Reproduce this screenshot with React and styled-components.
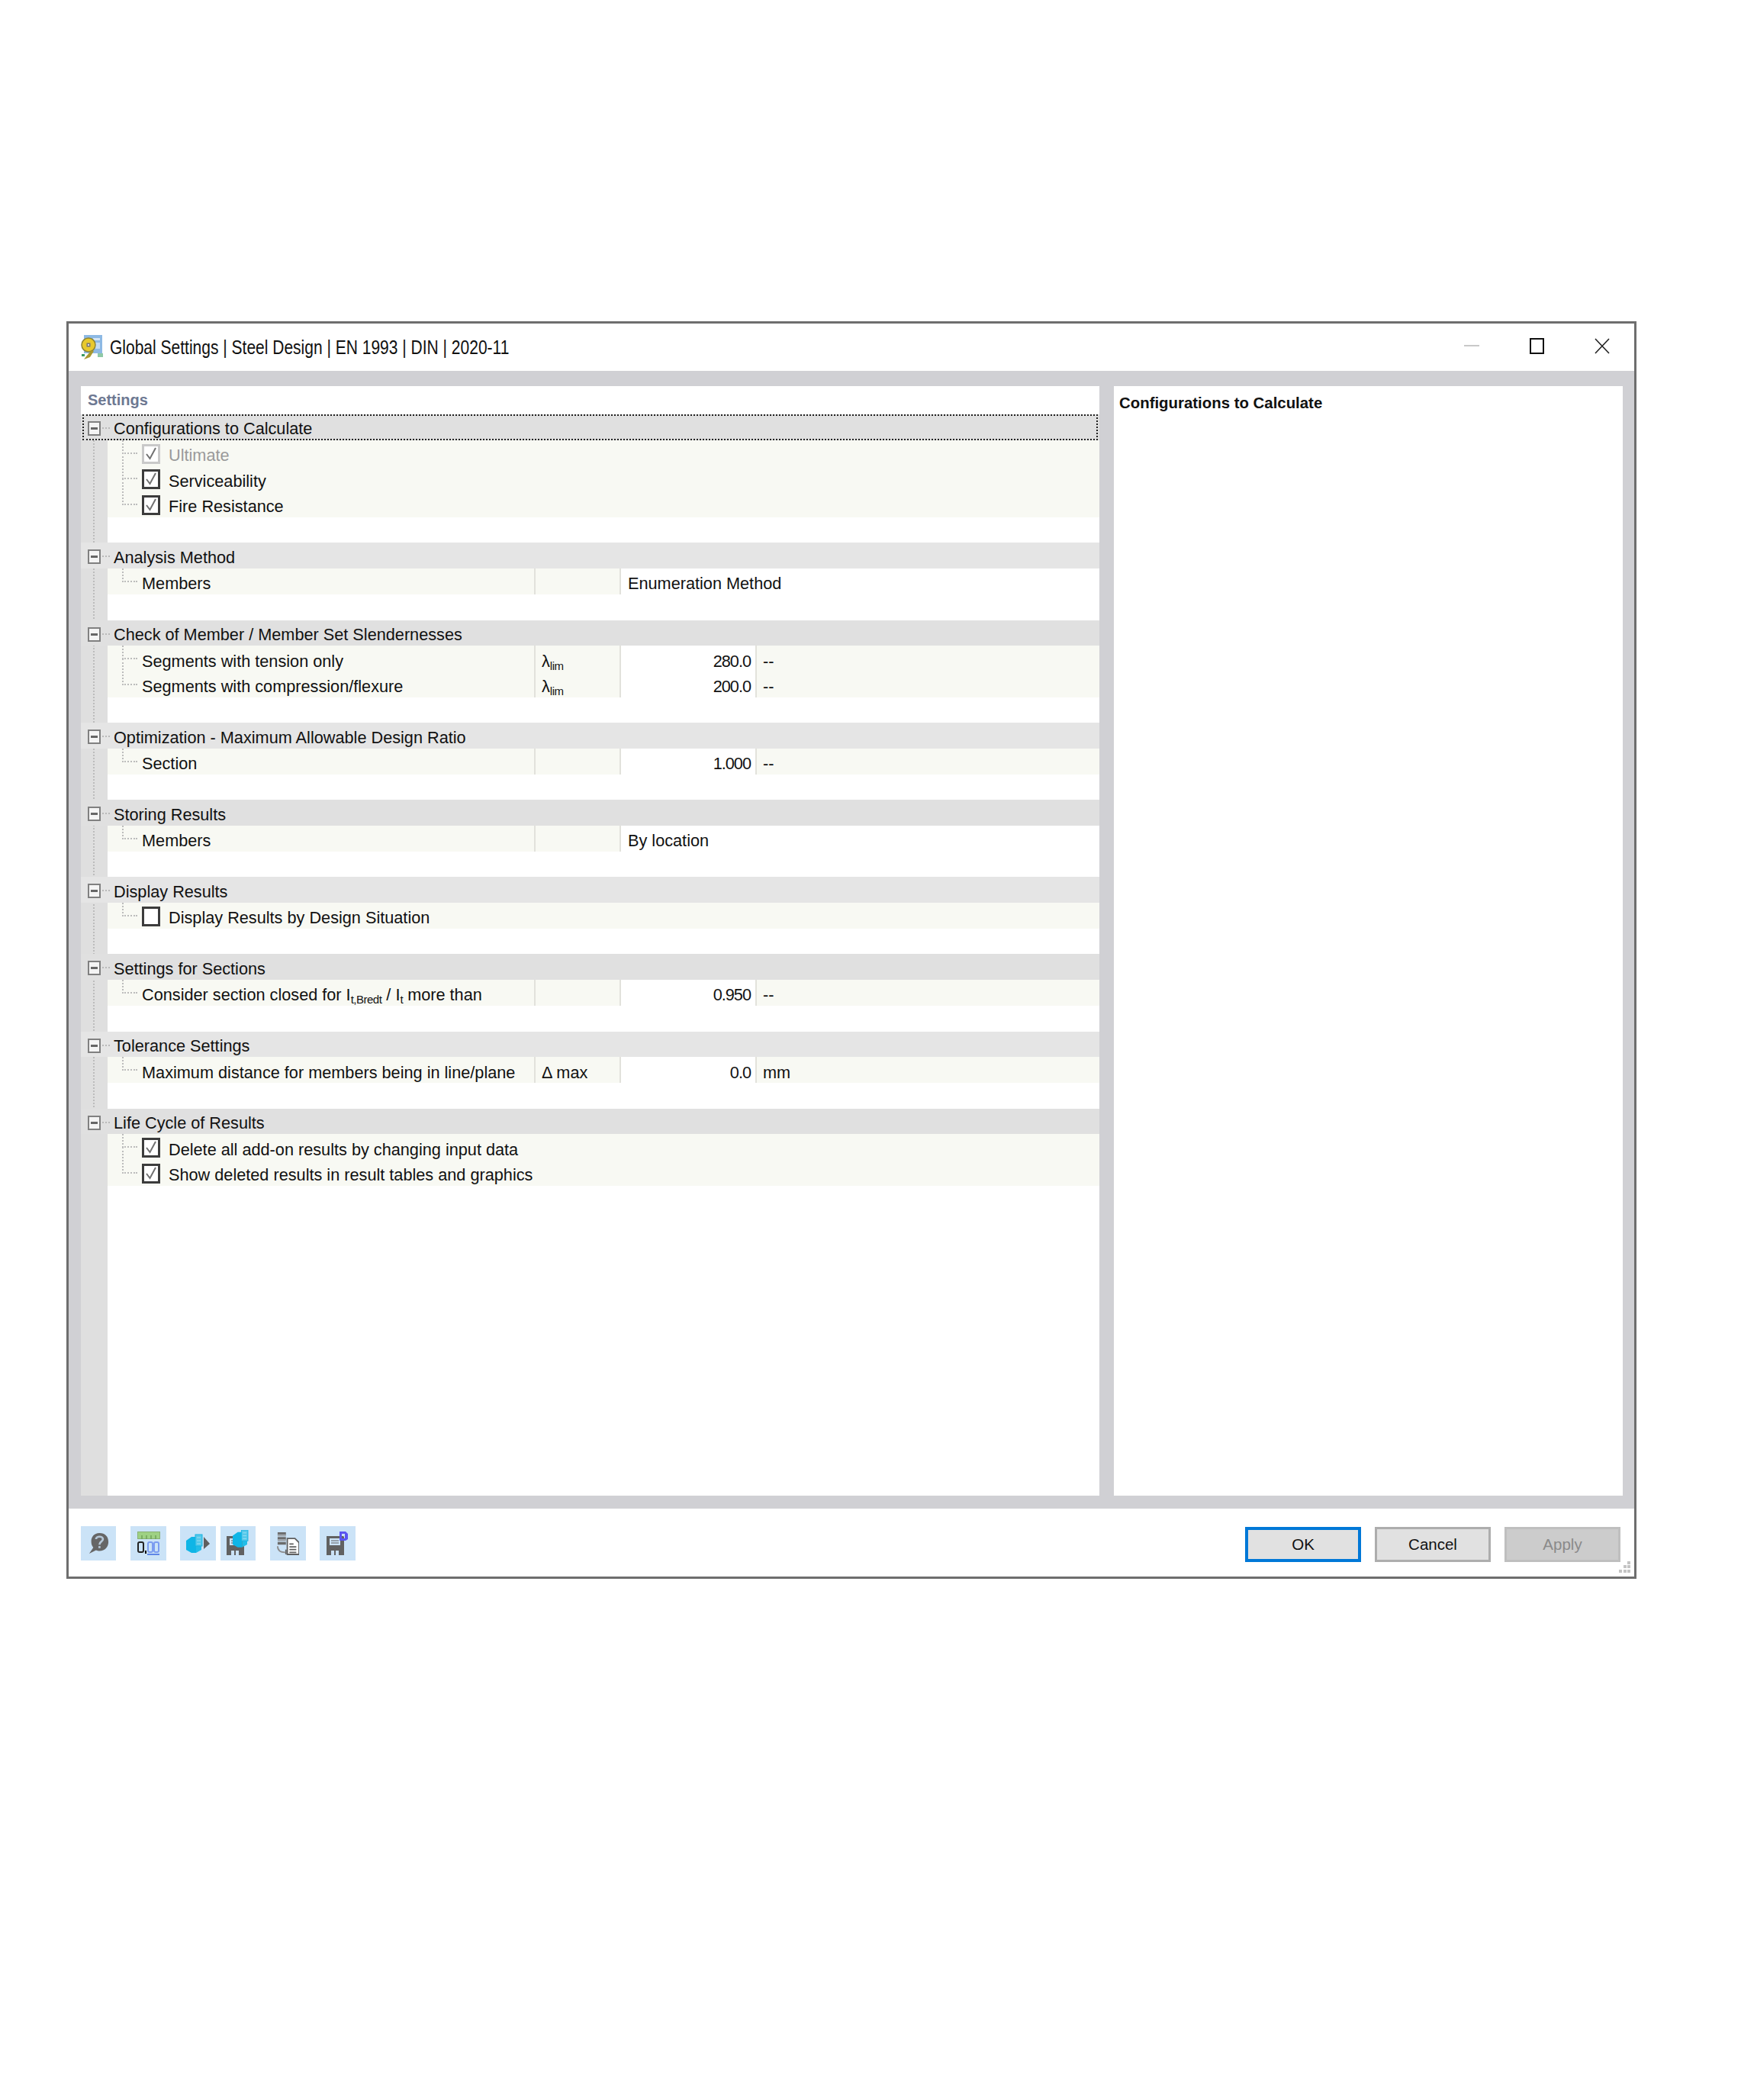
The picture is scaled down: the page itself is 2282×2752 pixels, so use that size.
import React from "react";
import styled, { createGlobalStyle } from "styled-components";

const ROW = 33.69;

const Global = createGlobalStyle`
  html, body { margin: 0; padding: 0; background: #fff; }
  body { font-family: "Liberation Sans", Arial, sans-serif; color: #111; }
`;

const Page = styled.div`
  width: 2282px;
  height: 2752px;
  padding: 421px 0 0 87px;
  box-sizing: border-box;
`;

const Win = styled.div`
  width: 2058px;
  height: 1648px;
  box-sizing: border-box;
  border: 3px solid #6e6e6e;
  display: flex;
  flex-direction: column;
  background: #d0d0d4;
`;

const TitleBar = styled.div`
  height: 62px;
  flex: none;
  background: #fff;
  display: flex;
  align-items: center;
  padding-left: 15px;
`;

const TitleText = styled.span`
  margin-left: 9px;
  font-size: 21px;
  display: inline-block;
  transform: scaleY(1.27);
  white-space: nowrap;
`;

const WinButtons = styled.div`
  margin-left: auto;
  margin-top: -4px;
  display: flex;
  align-items: center;
  padding-right: 32px;
  gap: 66px;
`;

const Body = styled.div`
  flex: 1;
  display: flex;
  gap: 19px;
  padding: 20px 15px 17px 16px;
  min-height: 0;
`;

const LeftPanel = styled.div`
  width: 1335px;
  background: #fff;
  display: flex;
  flex-direction: column;
  position: relative;
`;

const PanelTitle = styled.div`
  height: 37px;
  flex: none;
  line-height: 37px;
  padding-left: 9px;
  font-size: 20px;
  font-weight: bold;
  color: #6d7892;
`;

const Tree = styled.div`
  flex: 1;
  position: relative;
  background: linear-gradient(to right, #dfdfdf 35px, #fff 35px);
`;

const RowBase = styled.div`
  height: ${ROW}px;
  box-sizing: border-box;
  display: flex;
  align-items: center;
  font-size: 21.7px;
  white-space: nowrap;
  position: relative;
`;

const RowText = styled.span`
  margin-top: 5px;
  letter-spacing: ${(p) => (p.$num ? "-1px" : "normal")};
  color: ${(p) => (p.$off ? "#9a9a9a" : "#111")};
`;

const HeaderRow = styled(RowBase)`
  background: ${(p) => (p.$light ? "#e5e5e5" : "#e0e0e0")};
  padding-left: 43px;
  ${(p) =>
    p.$focus &&
    `&::after {
      content: "";
      position: absolute;
      inset: 0 2px;
      border: 2px dotted #222;
    }`}
`;

const ExpandBox = styled.span`
  position: absolute;
  left: 9px;
  top: 9px;
  width: 17px;
  height: 19px;
  box-sizing: border-box;
  border: 2px solid #808080;
  background: #f4f4f4;
  &::after {
    content: "";
    position: absolute;
    left: 2px;
    right: 2px;
    top: 6px;
    height: 3px;
    background: #666;
  }
`;

const HLine = styled.span`
  position: absolute;
  left: 28px;
  width: 10px;
  top: 17px;
  border-top: 2px dotted #b9b9b9;
`;

const Spine = styled.span`
  position: absolute;
  left: 16px;
  top: 22px;
  height: ${(p) => p.$h}px;
  border-left: 2px dotted #bcbcbc;
`;

const ChildRow = styled(RowBase)`
  margin-left: 35px;
  padding-left: 45px;
  padding-top: 2px;
  background: #f8f9f3;
`;

const ChildLine = styled.span`
  position: absolute;
  left: 19px;
  top: ${(p) => (p.$first ? 0 : -17)}px;
  height: ${(p) => (p.$first ? 18 : 35)}px;
  width: 20px;
  box-sizing: border-box;
  border-left: 2px dotted #bcbcbc;
  border-bottom: 2px dotted #bcbcbc;
`;

const Blank = styled.div`
  height: ${ROW}px;
`;

const CheckBox = styled.span`
  width: 24px;
  height: 26px;
  box-sizing: border-box;
  border: 3px solid ${(p) => (p.$off ? "#c9c9c9" : "#3c3c3c")};
  background: #fff;
  flex: none;
  margin-right: 11px;
  display: flex;
  align-items: center;
  justify-content: center;
`;

const Cols = styled.div`
  display: grid;
  grid-template-columns: 561px 112px 178px 1fr;
  height: ${ROW}px;
  margin-left: 35px;
  font-size: 21.7px;
  white-space: nowrap;
  position: relative;
`;

const LabelCell = styled.div`
  background: #f8f9f3;
  display: flex;
  align-items: center;
  padding: 2px 0 0 45px;
  border-right: 2px solid #e2e2dc;
`;

const SymbolCell = styled.div`
  background: #f8f9f3;
  display: flex;
  align-items: center;
  padding: 2px 0 0 8px;
  border-right: 2px solid #e2e2dc;
`;

const ValueCell = styled.div`
  display: flex;
  align-items: center;
  justify-content: flex-end;
  padding: 2px 6px 0 0;
  border-right: 2px solid #e2e2dc;
  background: #fff;
`;

const UnitCell = styled.div`
  display: flex;
  align-items: center;
  padding: 2px 0 0 8px;
  background: #f8f9f3;
`;

const WideValue = styled.div`
  grid-column: 3 / 5;
  display: flex;
  align-items: center;
  padding: 2px 0 0 9px;
  background: #fff;
`;

const Small = styled.span`
  font-size: 15px;
  position: relative;
  top: 4px;
  letter-spacing: -0.5px;
`;

const RightPanel = styled.div`
  flex: 1;
  background: #fff;
  padding: 11px 7px;
  font-size: 20.4px;
  font-weight: bold;
  color: #111;
`;

const Footer = styled.div`
  height: 89px;
  flex: none;
  background: #fff;
  display: flex;
  align-items: center;
  padding: 0 18px 0 16px;
  position: relative;
`;

const Tools = styled.div`
  display: flex;
  align-items: center;
  margin-top: 2px;
`;

const ToolBtn = styled.div`
  width: ${(p) => p.$w || 47}px;
  height: 45px;
  background: #cbe3f7;
  margin-left: ${(p) => p.$gap || 0}px;
  display: flex;
  align-items: center;
  justify-content: center;
`;

const Buttons = styled.div`
  margin-left: auto;
  margin-top: 5px;
  display: flex;
  gap: 18px;
`;

const Btn = styled.div`
  width: 152px;
  height: 46px;
  box-sizing: border-box;
  display: flex;
  align-items: center;
  justify-content: center;
  font-size: 20.5px;
  background: ${(p) => (p.$disabled ? "#cccccc" : "#e1e1e1")};
  color: ${(p) => (p.$disabled ? "#8a8a8a" : "#111")};
  border: ${(p) =>
    p.$primary ? "4px solid #0078d7" : p.$disabled ? "3px solid #bfbfbf" : "3px solid #adadad"};
`;

const Grip = styled.svg`
  position: absolute;
  right: 4px;
  bottom: 4px;
`;

const Check = () => (
  <svg width="18" height="20" viewBox="0 0 18 20">
    <path d="M3 10 L7.5 16 L15 2" fill="none" stroke="#707070" strokeWidth="2" />
  </svg>
);

const AppIcon = () => (
  <svg width="30" height="32" viewBox="0 0 30 32">
    <rect x="5" y="0" width="24" height="24" fill="#8db9e4" />
    <rect x="17" y="4" width="9" height="3" fill="#d5e6f5" />
    <rect x="19" y="10" width="7" height="8" fill="#c3dbf1" />
    <circle cx="11" cy="13" r="9" fill="#e8c92c" stroke="#8f8430" strokeWidth="1.5" />
    <rect x="8.5" y="10.5" width="5" height="5" fill="#777" />
    <rect x="10" y="12" width="2" height="2" fill="#e0e0e0" />
    <path d="M14 21 L18 21 L13 29 L5 32 L8 28 Z" fill="#a8982f" />
    <rect x="2" y="25" width="4" height="3" fill="#3a9a64" />
    <rect x="23" y="24" width="7" height="5" fill="#8fc9a6" />
  </svg>
);

const HelpIcon = () => (
  <svg width="27" height="31" viewBox="0 0 30 32">
    <path d="M16 1 C8 1 4 7 4 13 C4 17 5 20 7 22 L1 31 L11 26 C13 27 14 27 16 27 C24 27 29 21 29 14 C29 6 24 1 16 1 Z" fill="#666" />
    <path d="M11 10 C11 5 21 5 21 10 C21 14 16 13 16 18" fill="none" stroke="#b5c7d7" strokeWidth="3" />
    <rect x="14.5" y="20" width="3" height="3" fill="#b5c7d7" />
  </svg>
);

const NumberIcon = () => (
  <svg width="30" height="32" viewBox="0 0 30 32">
    <rect x="0.5" y="0.5" width="29" height="9" fill="#9ed183" stroke="#8ab074" />
    <path d="M6 5v5M12 5v5M18 5v5M24 5v5" stroke="#6fa35a" strokeWidth="1.5" />
    <rect x="1" y="14" width="7" height="13" rx="2" fill="none" stroke="#222" strokeWidth="2" />
    <rect x="10" y="25" width="2" height="4" fill="#000" />
    <rect x="14" y="14" width="6" height="13" rx="2" fill="none" stroke="#7b9cf0" strokeWidth="2" />
    <rect x="22" y="14" width="6" height="13" rx="2" fill="none" stroke="#7b9cf0" strokeWidth="2" />
    <rect x="13" y="29" width="16" height="2" fill="#5f86e6" />
  </svg>
);

const Cube = ({ x = 0, y = 0 }) => (
  <g transform={`translate(${x} ${y})`}>
    <path d="M0 8 L7 3 L13 3 L13 24 L7 24 L0 20 Z" fill="#0fb5e6" />
    <path d="M13 3 L20 3 L20 20 L13 24 Z" fill="#22bde8" />
    <rect x="12" y="0" width="9" height="15" fill="#55c8ea" stroke="#18b4e2" />
    <path d="M14 4h5M14 8h5M14 12h5" stroke="#9adff2" />
  </g>
);

const ModelIcon = () => (
  <svg width="32" height="26" viewBox="0 0 32 26">
    <Cube x="0" y="1" />
    <path d="M23 4 L31 13 L23 20 Z" fill="#5f5f5f" />
  </svg>
);

const Floppy = ({ children }) => (
  <svg width="32" height="36" viewBox="0 0 32 36">
    <path d="M1 8 H23 L24 9 V33 H1 Z" fill="#616161" />
    <rect x="5" y="11" width="14" height="9" fill="#cbe3f7" />
    <path d="M7 14h10M7 17h10" stroke="#616161" />
    <rect x="7" y="27" width="10" height="6" fill="#cbe3f7" />
    <rect x="11" y="27" width="2" height="6" fill="#616161" />
    {children}
  </svg>
);

const DbIcon = () => (
  <svg width="29" height="33" viewBox="0 0 32 36">
    <path d="M1 2h12v4h-12zM1 9h12v4h-12zM1 16h12v4h-12z" fill="#6b6b6b" />
    <path d="M1 5h12v3h-12zM1 12h12v3h-12z" fill="#a0a6ad" />
    <path d="M1 22 C1 28 5 31 12 31" fill="none" stroke="#8d8d8d" strokeWidth="2" />
    <path d="M12 27v7h2v-7z" fill="#666" />
    <path d="M15 11 H26 L32 17 V34 H15 Z" fill="#fff" stroke="#5f5f5f" strokeWidth="2" />
    <path d="M18 19h6M18 23h10M18 27h10M18 31h10" stroke="#5f5f5f" strokeWidth="2" />
  </svg>
);

const sections = [
  { title: "Analysis Method", rows: [{ label: "Members", wide: "Enumeration Method" }] },
  {
    title: "Check of Member / Member Set Slendernesses",
    rows: [
      { label: "Segments with tension only", sym: <>&lambda;<Small>lim</Small></>, value: "280.0", unit: "--" },
      { label: "Segments with compression/flexure", sym: <>&lambda;<Small>lim</Small></>, value: "200.0", unit: "--" },
    ],
  },
  { title: "Optimization - Maximum Allowable Design Ratio", rows: [{ label: "Section", value: "1.000", unit: "--" }] },
  { title: "Storing Results", rows: [{ label: "Members", wide: "By location" }] },
  { title: "Display Results", rows: [{ check: "Display Results by Design Situation", empty: true }] },
  {
    title: "Settings for Sections",
    rows: [
      {
        label: <>Consider section closed for I<Small>t,Bredt</Small> / I<Small>t</Small> more than</>,
        value: "0.950",
        unit: "--",
      },
    ],
  },
  {
    title: "Tolerance Settings",
    rows: [{ label: "Maximum distance for members being in line/plane", sym: "Δ max", value: "0.0", unit: "mm" }],
  },
];

const CheckRow = ({ label, off, empty, first }) => (
  <ChildRow>
    <ChildLine $first={first} />
    <CheckBox $off={off}>{!empty && <Check />}</CheckBox>
    <RowText $off={off}>{label}</RowText>
  </ChildRow>
);

const ValueRow = ({ row, first }) => (
  <Cols>
    <ChildLine $first={first} />
    <LabelCell><RowText>{row.label}</RowText></LabelCell>
    <SymbolCell><RowText>{row.sym}</RowText></SymbolCell>
    {row.wide ? (
      <WideValue><RowText>{row.wide}</RowText></WideValue>
    ) : (
      <>
        <ValueCell><RowText $num>{row.value}</RowText></ValueCell>
        <UnitCell><RowText>{row.unit}</RowText></UnitCell>
      </>
    )}
  </Cols>
);

const Header = ({ title, focus, light }) => (
  <HeaderRow $focus={focus} $light={light}>
    <ExpandBox />
    <HLine />
    <RowText>{title}</RowText>
  </HeaderRow>
);

export default function App() {
  return (
    <Page>
      <Global />
      <Win>
        <TitleBar>
          <AppIcon />
          <TitleText>Global Settings | Steel Design | EN 1993 | DIN | 2020-11</TitleText>
          <WinButtons>
            <svg width="20" height="2" viewBox="0 0 20 2"><rect width="20" height="2" fill="#c8c8c8" /></svg>
            <svg width="19" height="21" viewBox="0 0 19 21"><rect x="1" y="1" width="17" height="19" fill="none" stroke="#111" strokeWidth="2" /></svg>
            <svg width="20" height="21" viewBox="0 0 20 21"><path d="M1 1 L19 20 M19 1 L1 20" stroke="#222" strokeWidth="1.6" /></svg>
          </WinButtons>
        </TitleBar>
        <Body>
          <LeftPanel>
            <PanelTitle>Settings</PanelTitle>
            <Tree>
              <Spine $h={ROW * 27 - 8} />
              <Header title="Configurations to Calculate" focus />
              <CheckRow label="Ultimate" off first />
              <CheckRow label="Serviceability" />
              <CheckRow label="Fire Resistance" />
              <Blank />
              {sections.map((s, n) => (
                <div key={s.title}>
                  <Header title={s.title} light={n % 2 === 0} />
                  {s.rows.map((r, i) =>
                    r.check ? (
                      <CheckRow key={i} label={r.check} empty={r.empty} first={i === 0} />
                    ) : (
                      <ValueRow key={i} row={r} first={i === 0} />
                    )
                  )}
                  <Blank />
                </div>
              ))}
              <Header title="Life Cycle of Results" />
              <CheckRow label="Delete all add-on results by changing input data" first />
              <CheckRow label="Show deleted results in result tables and graphics" />
            </Tree>
          </LeftPanel>
          <RightPanel>Configurations to Calculate</RightPanel>
        </Body>
        <Footer>
          <Tools>
            <ToolBtn $w={46}><HelpIcon /></ToolBtn>
            <ToolBtn $gap={19}><NumberIcon /></ToolBtn>
            <ToolBtn $gap={18}><ModelIcon /></ToolBtn>
            <ToolBtn $w={46} $gap={6}>
              <Floppy><g transform="translate(9 0) scale(.95)"><Cube /></g></Floppy>
            </ToolBtn>
            <ToolBtn $gap={19}><DbIcon /></ToolBtn>
            <ToolBtn $gap={18}>
              <Floppy><path d="M18 2 H26 L29 5 V12 L26 14 H18 Z M21 5 V11 H25 V5 Z" fill="#5a55f0" fillRule="evenodd" /></Floppy>
            </ToolBtn>
          </Tools>
          <Buttons>
            <Btn $primary>OK</Btn>
            <Btn>Cancel</Btn>
            <Btn $disabled>Apply</Btn>
          </Buttons>
          <Grip width="16" height="16" viewBox="0 0 16 16">
            <path d="M11 0h4v4h-4zM6 5h4v4h-4zM11 5h4v4h-4zM0 11h4v4h-4zM6 11h4v4h-4zM11 11h4v4h-4z" fill="#c4c4c4" />
          </Grip>
        </Footer>
      </Win>
    </Page>
  );
}
